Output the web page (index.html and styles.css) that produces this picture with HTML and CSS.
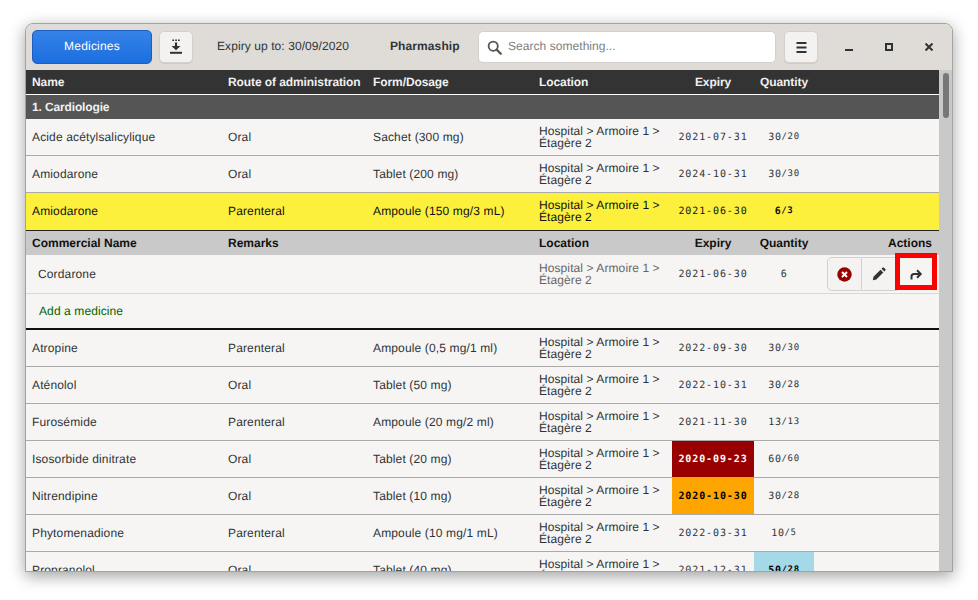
FILE: index.html
```html
<!DOCTYPE html>
<html lang="en">
<head>
<meta charset="utf-8">
<title>Pharmaship</title>
<link rel="stylesheet" href="styles.css">
</head>
<body>
<div class="window">
  <header class="toolbar">
    <button class="btn-primary">Medicines</button>
    <button class="btn btn-dl"><svg width="14" height="16" viewBox="0 0 14 16"><path d="M3.300 0.400h1.700v1.700H3.300zM6.200 0.400h1.700v1.700H6.200zM9 0.400h1.700v1.700H9z" fill="#2e3436"/><path d="M5.900 3.600h2.200V7h3.400L7 11.200 2.500 7h3.400z" fill="#2e3436"/><rect x="1" y="12.800" width="12" height="2" fill="#2e3436"/></svg></button>
    <span class="expiry-up">Expiry up to: 30/09/2020</span>
    <span class="app-name">Pharmaship</span>
    <div class="search">
      <svg width="15" height="15" viewBox="0 0 15 15"><circle cx="6.200" cy="6.200" r="4.600" fill="none" stroke="#555" stroke-width="1.800"/><path d="M9.600 9.600L13.800 13.800" stroke="#555" stroke-width="2.200" stroke-linecap="round"/></svg>
      <span>Search something...</span>
    </div>
    <button class="btn btn-menu"><svg width="11" height="11" viewBox="0 0 11 11"><path d="M0.500 0h10v2h-10zM0.500 4.500h10v2h-10zM0.500 9h10v2h-10z" fill="#2e3436"/></svg></button>
    <div class="wm">
      <svg width="8" height="8" viewBox="0 0 8 8"><rect x="0" y="6" width="8" height="2" fill="#2e3436"/></svg>
      <svg width="8" height="8" viewBox="0 0 8 8"><path d="M0 0h8v8H0z M2 2v4h4V2z" fill="#2e3436" fill-rule="evenodd"/></svg>
      <svg width="8" height="8" viewBox="0 0 8 8"><path d="M0.500 0.500L7.500 7.500M7.500 0.500L0.500 7.500" stroke="#2e3436" stroke-width="2"/></svg>
    </div>
  </header>
  <div class="table-head row-grid">
    <span>Name</span><span>Route of administration</span><span>Form/Dosage</span><span>Location</span><span class="c">Expiry</span><span class="c">Quantity</span><span></span>
  </div>
  <div class="body">
    <div class="list">
      <div class="group">1. Cardiologie</div>

      <div class="row row-grid"><span>Acide acétylsalicylique</span><span>Oral</span><span>Sachet (300 mg)</span><span class="loc">Hospital &gt; Armoire 1 &gt; Étagère 2</span><span class="date">2021-07-31</span><span class="qty">30<small>/20</small></span><span></span></div>
      <div class="row row-grid"><span>Amiodarone</span><span>Oral</span><span>Tablet (200 mg)</span><span class="loc">Hospital &gt; Armoire 1 &gt; Étagère 2</span><span class="date">2024-10-31</span><span class="qty">30<small>/30</small></span><span></span></div>
      <div class="row row-grid row-open"><span>Amiodarone</span><span>Parenteral</span><span>Ampoule (150 mg/3 mL)</span><span class="loc">Hospital &gt; Armoire 1 &gt; Étagère 2</span><span class="date">2021-06-30</span><span class="qty">6<small>/3</small></span><span></span></div>

      <div class="sub-head row-grid">
        <span>Commercial Name</span><span>Remarks</span><span></span><span>Location</span><span class="c">Expiry</span><span class="c">Quantity</span><span class="actions-title">Actions</span>
      </div>
      <div class="sub-row row-grid">
        <span class="sub-name">Cordarone</span><span></span><span></span><span class="loc muted">Hospital &gt; Armoire 1 &gt; Étagère 2</span><span class="date">2021-06-30</span><span class="qty">6</span>
        <span class="actions">
          <button class="act"><svg width="15" height="15" viewBox="0 0 15 15"><circle cx="7.500" cy="7.500" r="7.200" fill="#980000"/><path d="M5 5l5 5M10 5l-5 5" stroke="#fff" stroke-width="2"/></svg></button>
          <button class="act"><svg width="14" height="14" viewBox="0 0 14 14"><path d="M0.800 13.200l0.700-3.500 7-7 2.800 2.800-7 7zM9.500 1.700l1-1a1 1 0 0 1 1.400 0l1.400 1.400a1 1 0 0 1 0 1.400l-1 1z" fill="#2e3436"/></svg></button>
          <button class="act act-last"><svg width="13" height="11" viewBox="0 0 13 11"><path d="M1.500 10.500V7.500Q1.500 5 4 5H10.500M7 1.300L10.700 5L7 8.700" fill="none" stroke="#2e3436" stroke-width="2"/></svg><span class="highlight"></span></button>
        </span>
      </div>
      <div class="add-row"><span>Add a medicine</span></div>

      <div class="row row-grid"><span>Atropine</span><span>Parenteral</span><span>Ampoule (0,5 mg/1 ml)</span><span class="loc">Hospital &gt; Armoire 1 &gt; Étagère 2</span><span class="date">2022-09-30</span><span class="qty">30<small>/30</small></span><span></span></div>
      <div class="row row-grid"><span>Aténolol</span><span>Oral</span><span>Tablet (50 mg)</span><span class="loc">Hospital &gt; Armoire 1 &gt; Étagère 2</span><span class="date">2022-10-31</span><span class="qty">30<small>/28</small></span><span></span></div>
      <div class="row row-grid"><span>Furosémide</span><span>Parenteral</span><span>Ampoule (20 mg/2 ml)</span><span class="loc">Hospital &gt; Armoire 1 &gt; Étagère 2</span><span class="date">2021-11-30</span><span class="qty">13<small>/13</small></span><span></span></div>
      <div class="row row-grid"><span>Isosorbide dinitrate</span><span>Oral</span><span>Tablet (20 mg)</span><span class="loc">Hospital &gt; Armoire 1 &gt; Étagère 2</span><span class="date date-expired">2020-09-23</span><span class="qty">60<small>/60</small></span><span></span></div>
      <div class="row row-grid"><span>Nitrendipine</span><span>Oral</span><span>Tablet (10 mg)</span><span class="loc">Hospital &gt; Armoire 1 &gt; Étagère 2</span><span class="date date-soon">2020-10-30</span><span class="qty">30<small>/28</small></span><span></span></div>
      <div class="row row-grid"><span>Phytomenadione</span><span>Parenteral</span><span>Ampoule (10 mg/1 mL)</span><span class="loc">Hospital &gt; Armoire 1 &gt; Étagère 2</span><span class="date">2022-03-31</span><span class="qty">10<small>/5</small></span><span></span></div>
      <div class="row row-grid"><span>Propranolol</span><span>Oral</span><span>Tablet (40 mg)</span><span class="loc">Hospital &gt; Armoire 1 &gt; Étagère 2</span><span class="date">2021-12-31</span><span class="qty qty-over">50<small>/28</small></span><span></span></div>
    </div>
    <div class="scrollbar"><div class="thumb"></div></div>
  </div>
</div>
</body>
</html>
```
FILE: styles.css
```css
* { box-sizing: border-box; }
html, body { margin: 0; height: 100%; background: #fff; overflow: hidden; }
body { padding: 23px 25px 0; font-family: "Liberation Sans", Arial, sans-serif; font-size: 12px; color: #2e3436; text-rendering: geometricPrecision; }
button { font: inherit; padding: 0; margin: 0; color: inherit; text-rendering: inherit; }

.window {
  width: 928px; height: 549px; display: flex; flex-direction: column; overflow: hidden;
  border: 1px solid #a3a3a1; border-radius: 8px 8px 0 0; background: #f6f5f4;
  box-shadow: 0 4px 16px rgba(0,0,0,.38);
}

.toolbar { height: 46px; flex: none; display: flex; align-items: center; padding-left: 6px; background: #dfdbd6; }
.btn-primary { width: 120px; height: 34px; border: 1px solid #1b5fc0; border-radius: 5px; background: linear-gradient(#3582e8, #1c6fe0); color: #fff; letter-spacing: .2px; padding-bottom: 2px; }
.btn { width: 34px; height: 32px; border: 1px solid #d5d0cc; border-radius: 5px; background: #f3f2f0; display: flex; align-items: center; justify-content: center; box-shadow: 0 1px 1px rgba(0,0,0,.08); }
.btn-dl { margin-left: 7px; }
.expiry-up { margin-left: 24px; width: 173px; letter-spacing: .08px; padding-bottom: 2px; }
.app-name { font-weight: 700; width: 88px; letter-spacing: .1px; padding-bottom: 2px; }
.search { width: 298px; height: 32px; border: 1px solid #d5d0cc; border-radius: 5px; background: #fff; display: flex; align-items: center; gap: 6px; padding-left: 8px; color: #7b7f80; letter-spacing: .05px; }
.search span { padding-bottom: 2px; }
.btn-menu { margin-left: 8px; }
.wm { display: flex; align-items: center; margin-left: 27px; gap: 32px; }

.row-grid { display: grid; grid-template-columns: 196px 145px 166px 139px 82px 60px 1fr; }
.row-grid > span { padding-left: 6px; display: flex; align-items: center; min-width: 0; }
.row-grid > .c, .row-grid > .date, .row-grid > .qty { padding-left: 0; justify-content: center; }

.table-head { height: 25px; flex: none; background: #333; color: #f0f0f0; font-weight: 700; border-bottom: 1px solid #fff; padding-right: 12px; letter-spacing: -.09px; }

.body { flex: 1; min-height: 0; display: flex; }
.list { flex: 1; min-width: 0; overflow: hidden; }
.scrollbar { width: 13px; flex: none; background: #c9c9c9; padding: 3px 3px 0 4px; margin-top: -25px; position: relative; }
.thumb { width: 6px; height: 45px; border-radius: 3px; background: #777; }

.group { height: 24px; background: #555; color: #f0f0f0; font-weight: 700; display: flex; align-items: center; padding-left: 6px; letter-spacing: -.14px; }

.row { height: 37px; border-bottom: 1px solid #aaa; background: #f6f5f4; letter-spacing: .14px; }
.row-open { background: #fcf03c; color: #111; border-bottom: 1px solid #222; height: 38px; padding-bottom: 1px; }
.row-open .date, .row-open .qty { color: #111; }
.loc { line-height: 12px; letter-spacing: .09px; }
.muted { color: #666; }
.date { font-family: "DejaVu Sans Mono", monospace; font-size: 10px; letter-spacing: .9px; }
.qty { font-family: "DejaVu Sans Mono", monospace; font-size: 10px; letter-spacing: .6px; }
.qty small { font-size: 9px; }
.row-open .qty { font-weight: 700; }
.date-expired { background: #980000; color: #fff; font-weight: 700; }
.date-soon { background: #ffa500; color: #000; font-weight: 700; }
.qty-over { background: #a6d9e8; color: #000; font-weight: 700; }

.sub-head { height: 24px; background: #c9c9c9; color: #111; font-weight: 700; }
.row-grid > .actions-title { justify-content: flex-end; padding-right: 7px; }
.sub-row { height: 39px; border-bottom: 1px solid #d8d8d8; letter-spacing: .14px; }
.row-grid > .sub-name { padding-left: 12px; }
.row-grid > .actions { padding-left: 13px; letter-spacing: 0; }
.act { position: relative; width: 35px; height: 34px; background: #f4f3f1; border: 1px solid #d5d0cc; border-left: none; display: flex; align-items: center; justify-content: center; }
.act:first-child { border-left: 1px solid #d5d0cc; border-radius: 5px 0 0 5px; }
.act-last { width: 39px; background: #f6f5f4; border: none; }
.highlight { position: absolute; left: -2px; top: -4px; width: 42px; height: 37px; border: 5px solid #f00; }

.add-row { height: 36px; border-bottom: 2px solid #111; display: flex; align-items: center; padding-left: 13px; color: #060; letter-spacing: .1px; }
```
